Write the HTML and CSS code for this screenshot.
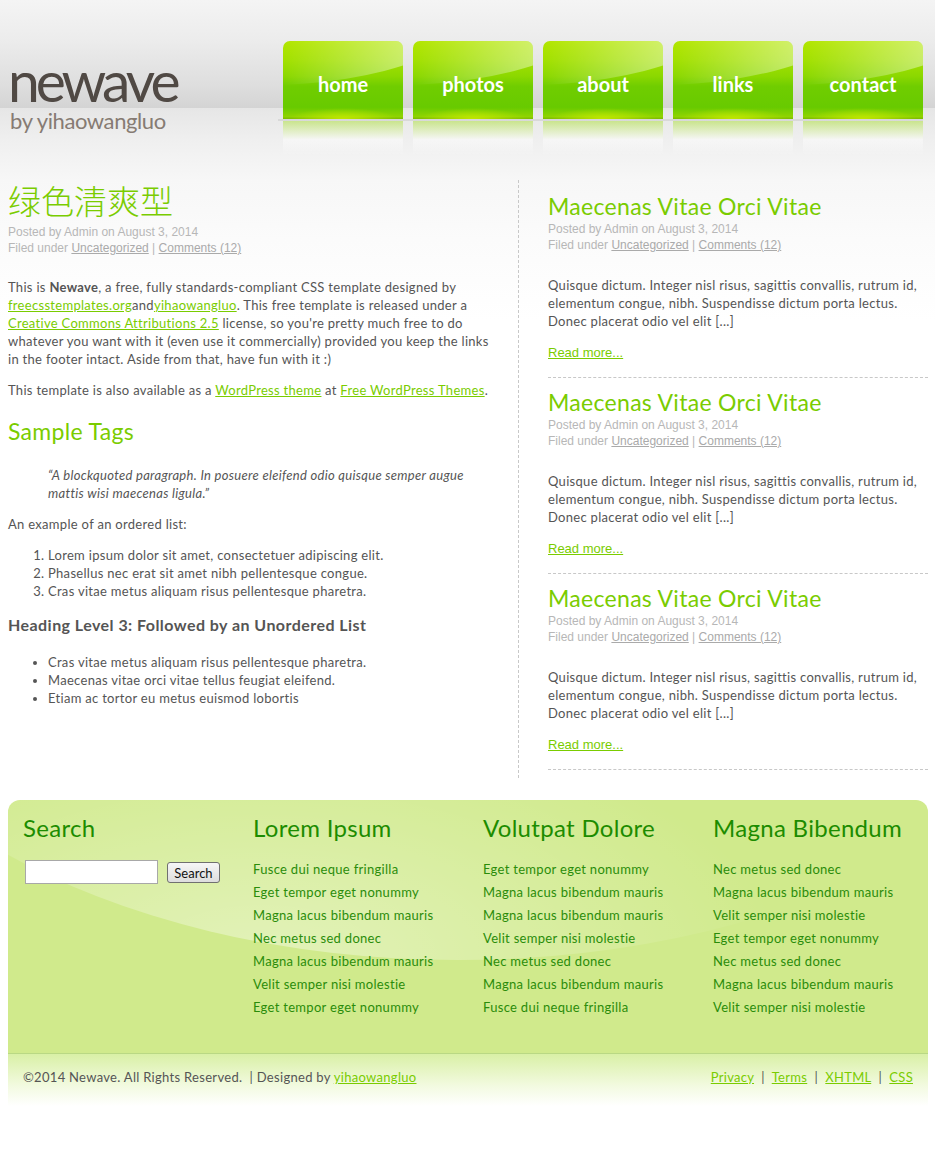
FILE: index.html
```html
<!DOCTYPE html>
<html lang="zh-CN">
<head>
<meta charset="utf-8">
<title>Newave</title>
<link rel="stylesheet" href="styles.css">
</head>
<body>
<div class="wrap header">
  <div class="logo">
    <h1 class="logo-title">newave</h1>
    <p class="logo-sub">by yihaowangluo</p>
  </div>
  <ul class="nav">
    <li><a href="#">home</a></li>
    <li><a href="#">photos</a></li>
    <li><a href="#">about</a></li>
    <li><a href="#">links</a></li>
    <li><a href="#">contact</a></li>
  </ul>
</div>

<div class="wrap content">
  <div class="main">
    <h1 class="post-title-cn">绿色清爽型</h1>
    <p class="meta">Posted by Admin on August 3, 2014<br>Filed under <a href="#">Uncategorized</a> | <a href="#">Comments (12)</a></p>
    <div class="entry">
      <p>This is <strong>Newave</strong>, a free, fully standards-compliant CSS template designed by <a href="#">freecsstemplates.org</a>and<a href="#">yihaowangluo</a>. This free template is released under a <a href="#">Creative Commons Attributions 2.5</a> license, so you're pretty much free to do whatever you want with it (even use it commercially) provided you keep the links in the footer intact. Aside from that, have fun with it :)</p>
      <p>This template is also available as a <a href="#">WordPress theme</a> at <a href="#">Free WordPress Themes</a>.</p>
      <h2 class="sub">Sample Tags</h2>
      <blockquote>“A blockquoted paragraph. In posuere eleifend odio quisque semper augue mattis wisi maecenas ligula.”</blockquote>
      <p>An example of an ordered list:</p>
      <ol>
        <li>Lorem ipsum dolor sit amet, consectetuer adipiscing elit.</li>
        <li>Phasellus nec erat sit amet nibh pellentesque congue.</li>
        <li>Cras vitae metus aliquam risus pellentesque pharetra.</li>
      </ol>
      <h3>Heading Level 3: Followed by an Unordered List</h3>
      <ul>
        <li>Cras vitae metus aliquam risus pellentesque pharetra.</li>
        <li>Maecenas vitae orci vitae tellus feugiat eleifend.</li>
        <li>Etiam ac tortor eu metus euismod lobortis</li>
      </ul>
    </div>
  </div>

  <div class="side">
    <div class="post">
      <h2 class="post-title">Maecenas Vitae Orci Vitae</h2>
      <p class="meta">Posted by Admin on August 3, 2014<br>Filed under <a href="#">Uncategorized</a> | <a href="#">Comments (12)</a></p>
      <p class="excerpt">Quisque dictum. Integer nisl risus, sagittis convallis, rutrum id, elementum congue, nibh. Suspendisse dictum porta lectus. Donec placerat odio vel elit [...]</p>
      <p class="more"><a href="#">Read more...</a></p>
    </div>
    <div class="post">
      <h2 class="post-title">Maecenas Vitae Orci Vitae</h2>
      <p class="meta">Posted by Admin on August 3, 2014<br>Filed under <a href="#">Uncategorized</a> | <a href="#">Comments (12)</a></p>
      <p class="excerpt">Quisque dictum. Integer nisl risus, sagittis convallis, rutrum id, elementum congue, nibh. Suspendisse dictum porta lectus. Donec placerat odio vel elit [...]</p>
      <p class="more"><a href="#">Read more...</a></p>
    </div>
    <div class="post">
      <h2 class="post-title">Maecenas Vitae Orci Vitae</h2>
      <p class="meta">Posted by Admin on August 3, 2014<br>Filed under <a href="#">Uncategorized</a> | <a href="#">Comments (12)</a></p>
      <p class="excerpt">Quisque dictum. Integer nisl risus, sagittis convallis, rutrum id, elementum congue, nibh. Suspendisse dictum porta lectus. Donec placerat odio vel elit [...]</p>
      <p class="more"><a href="#">Read more...</a></p>
    </div>
  </div>
</div>

<div class="wrap footer-box">
  <div class="fcol">
    <h2>Search</h2>
    <form class="search">
      <input type="text" class="search-input">
      <button type="button" class="search-btn">Search</button>
    </form>
  </div>
  <div class="fcol">
    <h2>Lorem Ipsum</h2>
    <ul>
      <li><a href="#">Fusce dui neque fringilla</a></li>
      <li><a href="#">Eget tempor eget nonummy</a></li>
      <li><a href="#">Magna lacus bibendum mauris</a></li>
      <li><a href="#">Nec metus sed donec</a></li>
      <li><a href="#">Magna lacus bibendum mauris</a></li>
      <li><a href="#">Velit semper nisi molestie</a></li>
      <li><a href="#">Eget tempor eget nonummy</a></li>
    </ul>
  </div>
  <div class="fcol">
    <h2>Volutpat Dolore</h2>
    <ul>
      <li><a href="#">Eget tempor eget nonummy</a></li>
      <li><a href="#">Magna lacus bibendum mauris</a></li>
      <li><a href="#">Magna lacus bibendum mauris</a></li>
      <li><a href="#">Velit semper nisi molestie</a></li>
      <li><a href="#">Nec metus sed donec</a></li>
      <li><a href="#">Magna lacus bibendum mauris</a></li>
      <li><a href="#">Fusce dui neque fringilla</a></li>
    </ul>
  </div>
  <div class="fcol">
    <h2>Magna Bibendum</h2>
    <ul>
      <li><a href="#">Nec metus sed donec</a></li>
      <li><a href="#">Magna lacus bibendum mauris</a></li>
      <li><a href="#">Velit semper nisi molestie</a></li>
      <li><a href="#">Eget tempor eget nonummy</a></li>
      <li><a href="#">Nec metus sed donec</a></li>
      <li><a href="#">Magna lacus bibendum mauris</a></li>
      <li><a href="#">Velit semper nisi molestie</a></li>
    </ul>
  </div>
</div>

<div class="wrap footer-bar">
  <p class="copy">©2014 Newave. All Rights Reserved. &nbsp;|&nbsp;Designed by <a href="#">yihaowangluo</a></p>
  <p class="links"><a href="#">Privacy</a> &nbsp;|&nbsp; <a href="#">Terms</a> &nbsp;|&nbsp; <a href="#">XHTML</a> &nbsp;|&nbsp; <a href="#">CSS</a></p>
</div>
</body>
</html>
```

FILE: styles.css
```css
* { box-sizing: border-box; }

html, body { margin: 0; padding: 0; }

body {
  font-family: Lato, "Noto Sans", "Noto Sans CJK SC", sans-serif;
  font-size: 13px;
  line-height: 18px;
  letter-spacing: 0.3px;
  color: #555;
  background-color: #fff;
  background-image: linear-gradient(to bottom, #f4f4f4 0px, #ececec 40px, #dedede 85px, #d4d4d4 108px, #e6e6e6 108px, #efefef 140px, #f7f7f7 180px, #fbfbfb 240px, #fff 320px);
  background-repeat: no-repeat;
  background-size: 100% 320px;
}

a { color: #7acc00; }

.wrap { width: 920px; margin-left: 8px; }

/* ---------- header ---------- */
.header {
  height: 180px;
  display: flex;
  justify-content: space-between;
  align-items: flex-start;
}

.logo { padding-top: 56px; }

.logo-title {
  margin: 0;
  font-family: Lato, sans-serif;
  font-weight: normal;
  font-size: 57px;
  line-height: 48px;
  letter-spacing: -4px;
  color: #504944;
}

.logo-sub {
  margin: 5px 0 0 2px;
  font-family: Lato, sans-serif;
  font-size: 22px;
  line-height: 24px;
  letter-spacing: -0.4px;
  color: #867b73;
}

.nav {
  list-style: none;
  margin: 41px 5px 0 0;
  padding: 0 0 0 5px;
  display: flex;
  gap: 10px;
  border-bottom: 2px solid rgba(0, 0, 0, 0.07);
}

.nav li { position: relative; }

.nav li::after {
  content: "";
  position: absolute;
  left: 0;
  right: 0;
  top: calc(100% + 2px);
  height: 34px;
  background: linear-gradient(to bottom, rgba(180, 225, 80, 0.6) 0%, rgba(255, 255, 255, 0.45) 55%, rgba(255, 255, 255, 0) 100%);
}

.nav a {
  display: block;
  position: relative;
  overflow: hidden;
  width: 120px;
  height: 78px;
  padding-top: 8px;
  border-radius: 7px 7px 0 0;
  text-align: center;
  text-decoration: none;
  color: #fff;
  font-family: Lato, sans-serif;
  font-weight: bold;
  font-size: 20px;
  line-height: 70px;
  letter-spacing: 0;
  background:
    radial-gradient(ellipse 45% 14% at 50% 100%, rgba(200, 235, 0, 0.9), rgba(200, 235, 0, 0)),
    linear-gradient(to bottom, #b2e600 0%, #a2e000 25%, #8cd800 45%, #70cd00 58%, #68ca00 85%, #8fd400 97%, #7cb800 100%);
}

.nav a::before {
  content: "";
  position: absolute;
  left: -238px;
  top: -123px;
  width: 436px;
  height: 167px;
  border-radius: 50%;
  background: linear-gradient(to right, rgba(255, 255, 255, 0) 55%, rgba(255, 255, 255, 0.5) 88%);
}

/* ---------- content ---------- */
.content {
  display: flex;
  align-items: stretch;
}

.main {
  width: 511px;
  padding-right: 20px;
  border-right: 1px dashed #c8c8c8;
}

.side {
  width: 380px;
  margin-left: 29px;
  padding-top: 2px;
  padding-bottom: 8px;
}

.post-title-cn {
  margin: 0;
  font-family: "Noto Sans CJK SC", sans-serif;
  font-weight: 300;
  font-size: 33px;
  line-height: 41px;
  letter-spacing: 0;
  color: #7acc00;
}

.meta {
  margin: 3px 0 22px;
  font-family: "Liberation Sans", Arial, sans-serif;
  font-size: 12px;
  line-height: 16px;
  letter-spacing: 0;
  color: #b7b7b7;
}

.meta a { color: #aaa; }

.entry p { margin: 0 0 13px; }

.entry .sub {
  margin: 18px 0 21px;
  font-weight: normal;
  font-size: 23px;
  line-height: 28px;
  color: #7acc00;
}

.entry blockquote {
  margin: 0 0 13px 40px;
  font-style: italic;
}

.entry ol, .entry ul {
  margin: 0;
  padding-left: 40px;
}

.entry ol { margin-bottom: 16px; }

.entry h3 {
  margin: 0 0 19px;
  font-size: 16px;
  line-height: 18px;
  letter-spacing: 0.45px;
  color: #555;
}

.post {
  padding: 10px 0 16px;
  border-bottom: 1px dashed #c8c8c8;
}

.post-title {
  margin: 0;
  font-weight: normal;
  font-size: 23px;
  line-height: 28px;
  color: #7acc00;
}

.post .meta { margin: 1px 0 23px; }

.excerpt { margin: 0 0 15px; }

.more {
  margin: 0;
  font-family: "Liberation Sans", Arial, sans-serif;
  font-size: 13px;
  line-height: 16px;
  letter-spacing: 0;
}

/* ---------- footer ---------- */
.footer-box {
  position: relative;
  overflow: hidden;
  margin-top: 22px;
  padding: 15px 0 34px;
  display: grid;
  grid-template-columns: repeat(4, 230px);
  background: #d0ea8c;
  border-radius: 12px 12px 0 0;
  border-bottom: 1px solid #b9d884;
}

.footer-box::before {
  content: "";
  position: absolute;
  left: -200px;
  top: -596px;
  width: 1300px;
  height: 756px;
  border-radius: 50%;
  background: radial-gradient(ellipse 40% 32% at 35% 100%, rgba(255, 255, 255, 0.4), rgba(255, 255, 255, 0));
}

.fcol {
  position: relative;
  padding-left: 15px;
}

.fcol h2 {
  margin: 0 0 18px;
  font-weight: normal;
  font-size: 24px;
  line-height: 25px;
  color: #1c8c00;
}

.fcol ul {
  list-style: none;
  margin: 0;
  padding: 0;
  line-height: 23px;
}

.fcol a {
  color: #2a8c0a;
  text-decoration: none;
}

.search {
  display: flex;
  align-items: flex-start;
  gap: 9px;
  margin: 0;
  padding: 2px 0 0 2px;
}

.search-input {
  width: 133px;
  height: 24px;
  margin: 0;
  border: 1px solid #a8a8a8;
  background: #fff;
}

.search-btn {
  margin: 2px 0 0;
  width: 53px;
  height: 21px;
  padding: 0;
  border: 1px solid #707070;
  border-radius: 3px;
  background: linear-gradient(to bottom, #f6f6f6, #dddddd);
  font-family: Lato, sans-serif;
  font-size: 13px;
  color: #111;
}

.footer-bar {
  height: 52px;
  padding: 14px 15px 0;
  display: flex;
  justify-content: space-between;
  align-items: flex-start;
  background: linear-gradient(to bottom, #d9f0a6 0%, #f2fadf 60%, #fff 100%);
}

.footer-bar p { margin: 0; }

.footer-bar a { color: #7acc00; }
```
